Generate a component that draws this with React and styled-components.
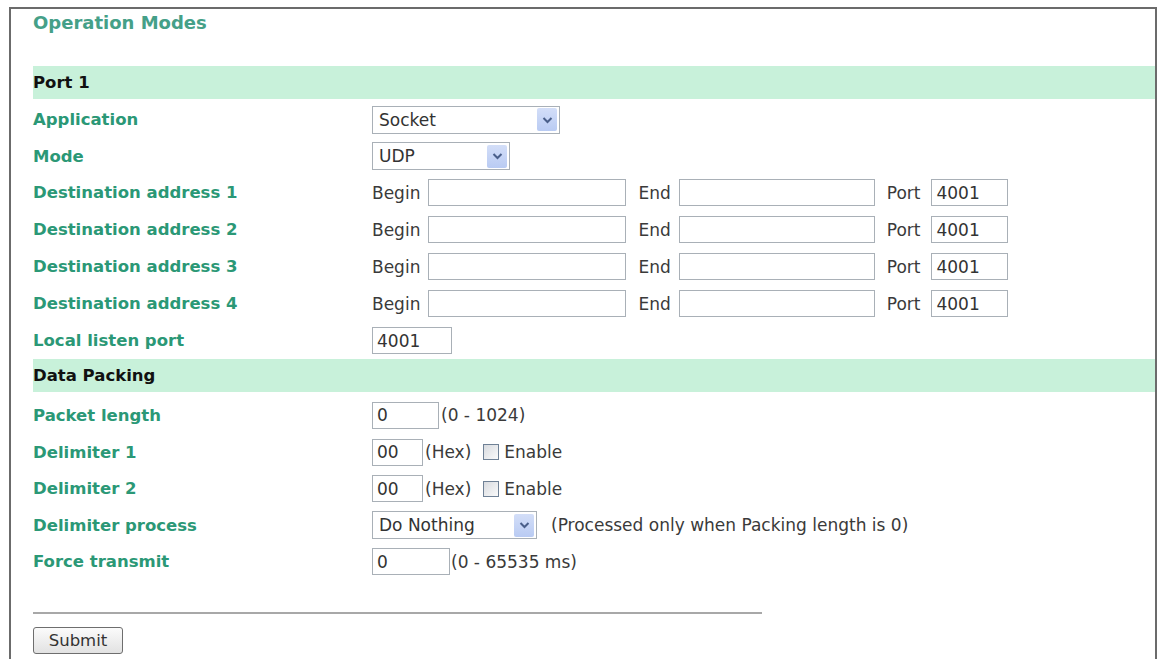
import React from "react";
import styled, { createGlobalStyle } from "styled-components";

const GlobalStyle = createGlobalStyle`
  body {
    margin: 0;
    padding: 7px 0 0 9px;
    background: #ffffff;
    font-family: "DejaVu Sans", Verdana, sans-serif;
    overflow: hidden;
  }
`;

const Frame = styled.div`
  width: 1122px;
  height: 700px;
  border: 2px solid #6b6b6b;
  padding-left: 22px;
  box-sizing: content-box;
`;

const Title = styled.div`
  height: 28px;
  line-height: 28px;
  font-size: 18px;
  font-weight: bold;
  color: #45a088;
  margin-bottom: 29px;
`;

const SectionBar = styled.div`
  height: 33px;
  display: flex;
  align-items: center;
  background: #c8f1da;
  font-size: 16.5px;
  font-weight: bold;
  color: #111;
`;

const Rows = styled.div`
  padding-top: ${(p) => p.$top || 2}px;
`;

const Row = styled.div`
  display: grid;
  grid-template-columns: 339px 1fr;
  align-items: center;
  height: ${(p) => p.$h || 37}px;
`;

const Label = styled.div`
  font-size: 16.5px;
  font-weight: bold;
  color: #2b9876;
`;

const Controls = styled.div`
  display: flex;
  align-items: center;
  font-size: 17px;
  color: #3a3a3a;
`;

const Text = styled.span`
  margin-left: ${(p) => p.$ml || 0}px;
  margin-right: ${(p) => p.$mr || 0}px;
  white-space: nowrap;
`;

const Input = styled.input`
  width: ${(p) => p.$w}px;
  height: 27px;
  box-sizing: border-box;
  border: 1px solid #a9b0b7;
  padding: 0 4px;
  margin: 0;
  font-family: "DejaVu Sans", Verdana, sans-serif;
  font-size: 17px;
  color: #333;
  background: #fff;
  outline: none;
`;

const SelectBox = styled.div`
  width: ${(p) => p.$w}px;
  height: 28px;
  box-sizing: border-box;
  border: 1px solid #a9b0b7;
  display: flex;
  align-items: center;
  justify-content: space-between;
  padding: 0 2px 0 6px;
  background: #fff;
  color: #333;
`;

const ArrowBtn = styled.span`
  width: 20px;
  height: 23px;
  display: flex;
  align-items: center;
  justify-content: center;
  background: linear-gradient(#d3def8, #b9cbf3);
  border-radius: 2px;
`;

const Check = styled.span`
  width: 16px;
  height: 16px;
  box-sizing: border-box;
  border: 1px solid #6f8196;
  background: linear-gradient(135deg, #d8dbe0, #fafafa);
  margin-left: 12px;
  margin-right: 5px;
`;

const Rule = styled.div`
  width: 729px;
  height: 2px;
  background: #a8a8a8;
  margin-top: 32px;
`;

const Button = styled.button`
  margin-top: 13px;
  width: 90px;
  height: 27px;
  border: 1px solid #6e6e6e;
  border-radius: 3px;
  background: linear-gradient(#fbfbfb, #e2e2e2);
  font-family: "DejaVu Sans", Verdana, sans-serif;
  font-size: 16.5px;
  color: #333;
  padding: 0;
`;

function Select({ w, value }) {
  return (
    <SelectBox $w={w}>
      <span>{value}</span>
      <ArrowBtn>
        <svg width="11" height="8" viewBox="0 0 11 8">
          <path d="M1.5 2 L5.5 6 L9.5 2" fill="none" stroke="#4a5f8a" strokeWidth="2" />
        </svg>
      </ArrowBtn>
    </SelectBox>
  );
}

function DestRow({ n }) {
  return (
    <Row>
      <Label>Destination address {n}</Label>
      <Controls>
        <Text $mr={8}>Begin</Text>
        <Input $w={198} />
        <Text $ml={12} $mr={8}>End</Text>
        <Input $w={196} />
        <Text $ml={12} $mr={11}>Port</Text>
        <Input $w={77} defaultValue="4001" />
      </Controls>
    </Row>
  );
}

export default function App() {
  return (
    <>
      <GlobalStyle />
      <Frame>
        <Title>Operation Modes</Title>

        <SectionBar>Port 1</SectionBar>
        <Rows>
          <Row>
            <Label>Application</Label>
            <Controls>
              <Select w={188} value="Socket" />
            </Controls>
          </Row>
          <Row $h={36}>
            <Label>Mode</Label>
            <Controls>
              <Select w={138} value="UDP" />
            </Controls>
          </Row>
          {[1, 2, 3, 4].map((n) => (
            <DestRow key={n} n={n} />
          ))}
          <Row>
            <Label>Local listen port</Label>
            <Controls>
              <Input $w={80} defaultValue="4001" />
            </Controls>
          </Row>
        </Rows>

        <SectionBar>Data Packing</SectionBar>
        <Rows $top={4}>
          <Row $h={38}>
            <Label>Packet length</Label>
            <Controls>
              <Input $w={67} defaultValue="0" />
              <Text $ml={2}>(0 - 1024)</Text>
            </Controls>
          </Row>
          {[1, 2].map((n) => (
            <Row key={n} $h={36.5}>
              <Label>Delimiter {n}</Label>
              <Controls>
                <Input $w={51} defaultValue="00" />
                <Text $ml={2}>(Hex)</Text>
                <Check />
                <Text>Enable</Text>
              </Controls>
            </Row>
          ))}
          <Row $h={36.5}>
            <Label>Delimiter process</Label>
            <Controls>
              <Select w={165} value="Do Nothing" />
              <Text $ml={14}>(Processed only when Packing length is 0)</Text>
            </Controls>
          </Row>
          <Row $h={36.5}>
            <Label>Force transmit</Label>
            <Controls>
              <Input $w={78} defaultValue="0" />
              <Text $ml={1}>(0 - 65535 ms)</Text>
            </Controls>
          </Row>
        </Rows>

        <Rule />
        <Button>Submit</Button>
      </Frame>
    </>
  );
}
